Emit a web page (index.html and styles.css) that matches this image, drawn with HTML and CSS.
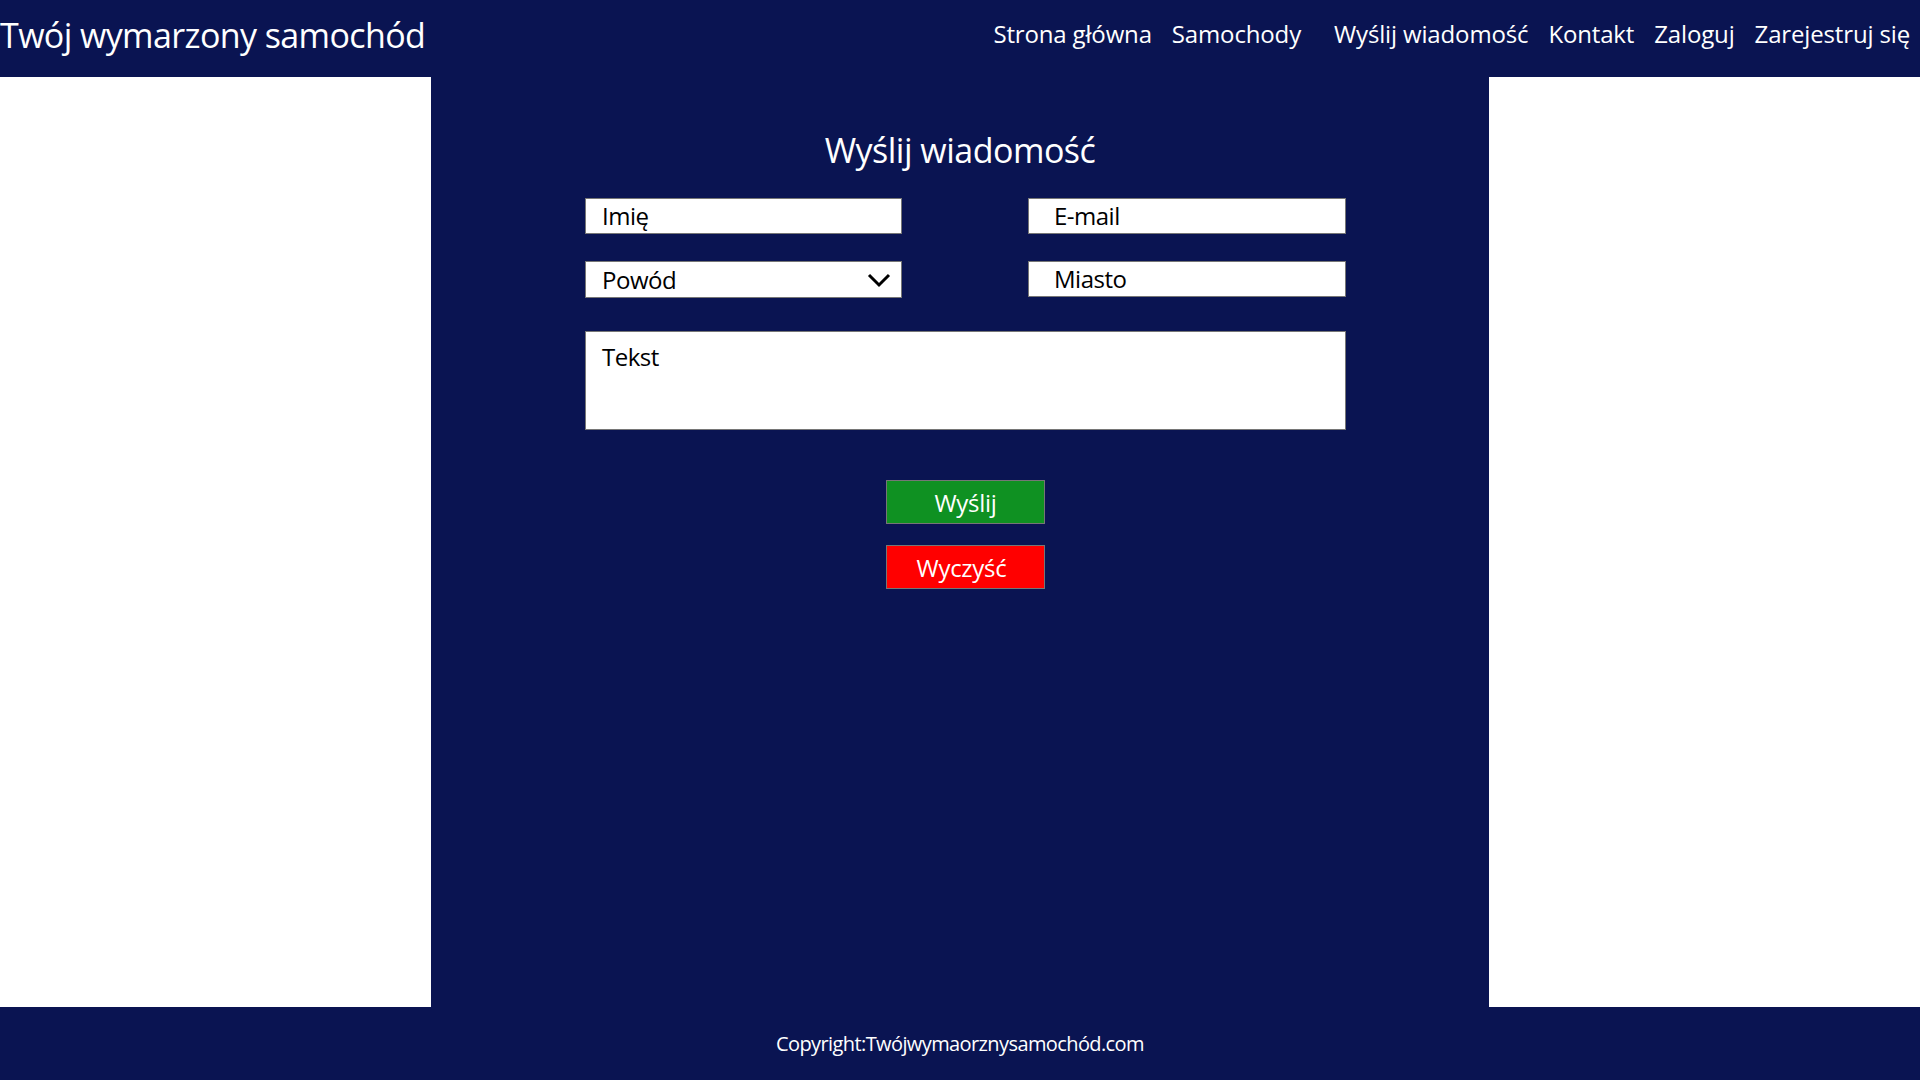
FILE: index.html
```html
<!DOCTYPE html>
<html lang="pl">
<head>
<meta charset="utf-8">
<title>Twój wymarzony samochód</title>
<link rel="stylesheet" href="styles.css">
</head>
<body>
<header class="topbar">
  <div class="brand">Twój wymarzony samochód</div>
  <nav class="nav">
    <a class="nav-link" href="#">Strona główna</a>
    <a class="nav-link nav-link-wide" href="#">Samochody</a>
    <a class="nav-link" href="#">Wyślij wiadomość</a>
    <a class="nav-link" href="#">Kontakt</a>
    <a class="nav-link" href="#">Zaloguj</a>
    <a class="nav-link" href="#">Zarejestruj się</a>
  </nav>
</header>
<main class="page">
  <section class="content">
    <h1 class="title">Wyślij wiadomość</h1>
    <form class="form">
      <div class="field">Imię</div>
      <div class="field field-right">E-mail</div>
      <div class="field field-select">
        <span>Powód</span>
        <svg class="chevron" width="24" height="16" viewBox="0 0 24 16"><path d="M2 3 L12 13 L22 3" fill="none" stroke="#000" stroke-width="3"/></svg>
      </div>
      <div class="field field-right">Miasto</div>
      <div class="field field-area">Tekst</div>
      <div class="buttons">
        <button type="button" class="btn btn-send">Wyślij</button>
        <button type="button" class="btn btn-clear">Wyczyść</button>
      </div>
    </form>
  </section>
</main>
<footer class="footer">Copyright:Twójwymaorznysamochód.com</footer>
</body>
</html>
```

FILE: styles.css
```css
* { box-sizing: border-box; }
html, body { margin: 0; padding: 0; }
body {
  background: #ffffff;
  font-family: "Open Sans", "Noto Sans", sans-serif;
  color: #ffffff;
}
.topbar {
  height: 77px;
  background: #0a1452;
  display: flex;
  align-items: center;
  justify-content: space-between;
}
.brand {
  font-size: 34px;
  letter-spacing: -0.6px;
  padding-left: 0;
  margin-top: -8px;
}
.nav {
  display: flex;
  align-items: center;
  margin-top: -10px;
}
.nav-link {
  color: #ffffff;
  text-decoration: none;
  font-size: 24px;
  letter-spacing: -0.15px;
  padding: 0 10px;
}
.nav-link-wide { margin-right: 13px; }
.page {
  display: flex;
  justify-content: center;
}
.content {
  width: 1058px;
  height: 930px;
  background: #0a1452;
}
.title {
  margin: 0;
  padding-top: 49px;
  font-weight: 400;
  font-size: 34px;
  letter-spacing: -0.5px;
  line-height: 48px;
  text-align: center;
}
.form {
  margin: 24px 0 0 154px;
  width: 761px;
  display: grid;
  grid-template-columns: 317px 318px;
  column-gap: 126px;
  row-gap: 27px;
}
.field {
  height: 36px;
  background: #ffffff;
  border: 1px solid #767676;
  color: #000000;
  font-size: 24px;
  letter-spacing: -0.5px;
  line-height: 34px;
  padding-left: 16px;
}
.field-right { padding-left: 25px; }
.field-select {
  height: 37px;
  display: flex;
  justify-content: space-between;
  align-items: center;
  padding-right: 10px;
}
.chevron { display: block; }
.field-area {
  grid-column: 1 / 3;
  height: 99px;
  margin-top: 6px;
  padding-top: 8px;
}
.buttons {
  grid-column: 1 / 3;
  display: flex;
  flex-direction: column;
  align-items: center;
  gap: 21px;
  margin-top: 23px;
}
.btn {
  width: 159px;
  height: 44px;
  border: 1px solid #767676;
  color: #ffffff;
  font-family: "Open Sans", "Noto Sans", sans-serif;
  font-size: 24px;
  letter-spacing: -0.3px;
  padding: 0;
}
.btn-send { background: #0f9122; }
.btn-clear { background: #ff0000; padding-right: 8px; }
.footer {
  height: 73px;
  background: #0a1452;
  display: flex;
  align-items: center;
  justify-content: center;
  font-size: 20px;
  letter-spacing: -0.6px;
}
```
